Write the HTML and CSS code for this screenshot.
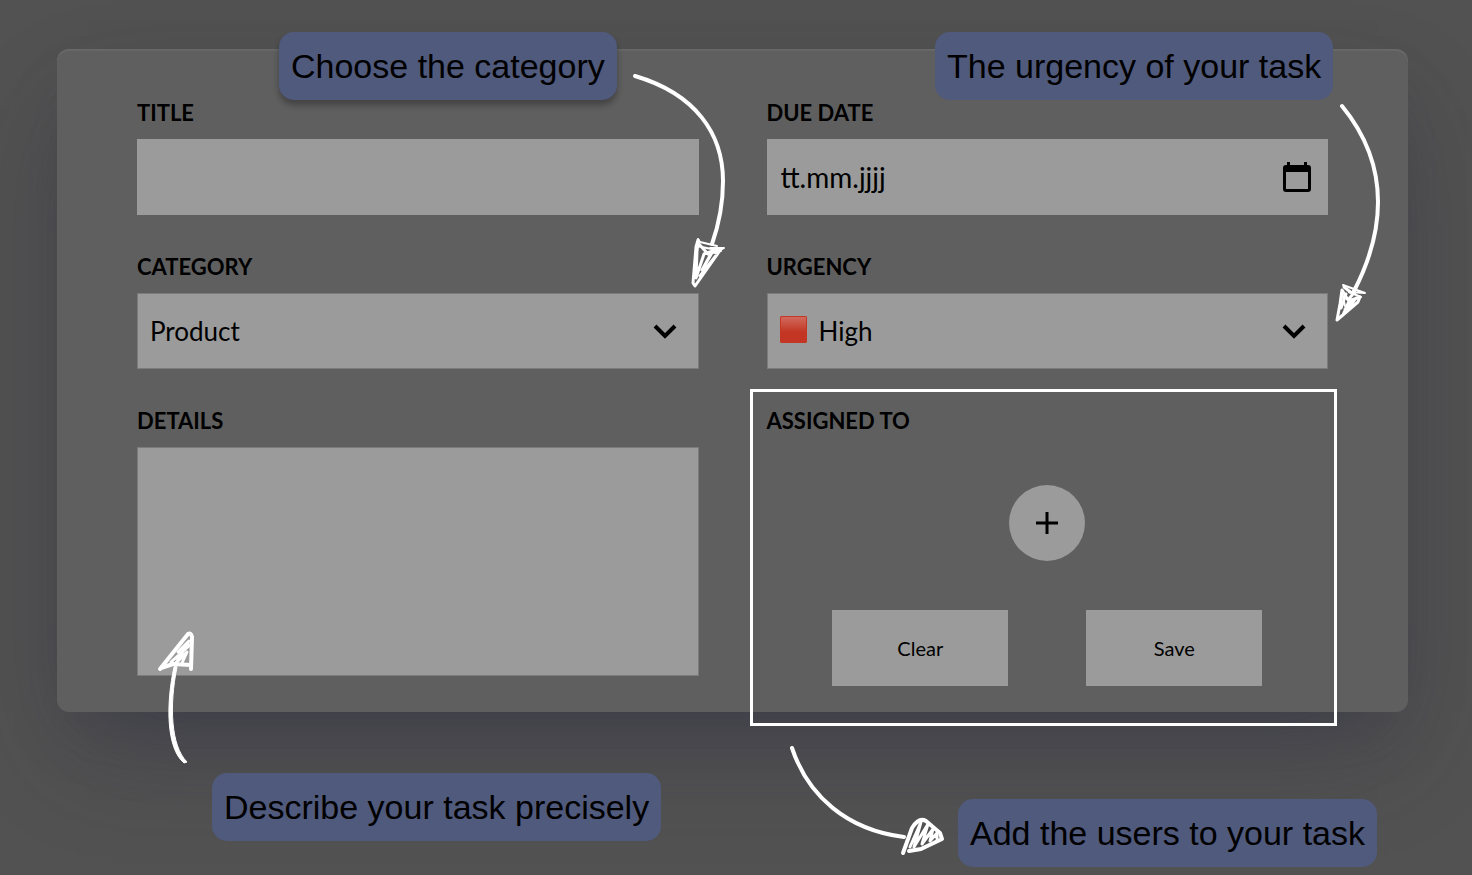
FILE: index.html
```html
<!DOCTYPE html>
<html lang="en">
<head>
<meta charset="utf-8">
<meta name="viewport" content="width=device-width, initial-scale=1">
<title>Add task</title>
<link rel="stylesheet" href="styles.css">
</head>
<body>
<main class="stage">
  <form class="card">
    <div class="field">
      <label for="title">TITLE</label>
      <input class="control" id="title" type="text">
    </div>
    <div class="field">
      <label for="due">DUE DATE</label>
      <div class="control-wrap">
        <input class="control date" id="due" type="text" placeholder="tt.mm.jjjj">
        <button class="calendar" type="button" aria-label="Open calendar">
          <svg width="28" height="30" viewBox="0 0 28 30"><path fill-rule="evenodd" d="M4 0h3v3h14V0h3v3h1a3 3 0 0 1 3 3v21a3 3 0 0 1-3 3H3a3 3 0 0 1-3-3V6a3 3 0 0 1 3-3h1zM3 10v17h22V10z"/></svg>
        </button>
      </div>
    </div>
    <div class="field">
      <label for="category">CATEGORY</label>
      <div class="control-wrap">
        <select class="control outlined" id="category"><option>Product</option></select>
        <svg class="chevron" width="24" height="16" viewBox="0 0 24 16"><path d="M2 2l10 10L22 2"/></svg>
      </div>
    </div>
    <div class="field">
      <label for="urgency">URGENCY</label>
      <div class="control-wrap">
        <select class="control outlined with-swatch" id="urgency"><option>High</option></select>
        <span class="swatch"></span>
        <svg class="chevron" width="24" height="16" viewBox="0 0 24 16"><path d="M2 2l10 10L22 2"/></svg>
      </div>
    </div>
    <div class="field">
      <label for="details">DETAILS</label>
      <textarea class="control outlined details" id="details"></textarea>
    </div>
    <section class="assigned" aria-labelledby="assigned-label">
      <h2 class="assigned-label" id="assigned-label">ASSIGNED TO</h2>
      <button class="add" type="button" aria-label="Add user">
        <svg width="22" height="22" viewBox="0 0 22 22"><path d="M11 0v22M0 11h22"/></svg>
      </button>
      <div class="actions">
        <button class="action" type="reset">Clear</button>
        <button class="action" type="submit">Save</button>
      </div>
    </section>
  </form>

  <p class="callout callout-category">Choose the category</p>
  <p class="callout callout-urgency">The urgency of your task</p>
  <p class="callout callout-details">Describe your task precisely</p>
  <p class="callout callout-users">Add the users to your task</p>

  <svg class="arrow arrow-category" width="110" height="230" viewBox="625 65 110 230">
    <path d="M635 76C696 94 723 134 723 181C723 202 719 224 712 244"/>
    <path class="head" d="M698 240L696 247L693 283L695 286L721 249L708 254L698 243L697 251L696 278L704 254L713 251L702 270L712 252L718 253L700 276"/>
    <path class="sketch" d="M698 239L700 242L717 246M710 248L724 248L715 253M697 246L721 251"/>
  </svg>
  <svg class="arrow arrow-urgency" width="60" height="235" viewBox="1330 95 60 235">
    <path d="M1342 106C1365 134 1378 166 1378 202C1378 234 1368 264 1354 291"/>
    <path class="head" d="M1342 290L1340 304L1337 320L1358 302L1360 297L1349 301L1343 315L1356 298L1345 309M1342 290L1348 300L1353 294L1344 287M1346 294L1341 308"/>
    <path class="sketch" d="M1343 285L1365 293L1349 292L1361 297M1342 292L1345 306"/>
  </svg>
  <svg class="arrow arrow-details" width="50" height="145" viewBox="150 625 50 145">
    <path class="solid" d="M174 667C166 703 166 748 184 763L187 762C171 746 169 706 177 667z"/>
    <path class="head heavy" d="M160 669L188 634Q191 632 192 637L191 669M161 668L173 664L191 665"/>
    <path class="head" d="M171 662L190 645M178 652L189 641L176 663L187 652L182 663"/>
  </svg>
  <svg class="arrow arrow-users" width="165" height="120" viewBox="785 740 165 120">
    <path d="M792 748C808 796 847 830 904 837"/>
    <path class="head heavy" d="M903 853L912 828Q919 817 926 821L940 833L942 839L921 849L909 851"/>
    <path class="head" d="M910 847L921 822L914 847L928 824L922 844L933 829L930 841L937 833L937 839"/>
  </svg>
</main>
</body>
</html>
```
FILE: styles.css
```css
* { box-sizing: border-box; }

body {
  margin: 0;
  background: #525252;
  color: #000;
  font-family: "Lato", "Noto Sans", sans-serif;
}

.stage {
  position: relative;
  min-height: 100vh;
  padding: 49px 64px 64px 57px;
  overflow: hidden;
}

.card {
  display: grid;
  grid-template-columns: 1fr 1fr;
  gap: 37px 68px;
  align-items: start;
  padding: 49px 80px 26px;
  border-radius: 12px;
  background: #5f5f5f;
  box-shadow: 0 50px 100px -20px rgba(50, 50, 70, .45),
    0 30px 60px -30px rgba(50, 50, 60, .5),
    inset 0 2px 1px #686868;
}

.field {
  display: flex;
  flex-direction: column;
  gap: 11px;
}

label,
.assigned-label {
  margin: 0;
  font-size: 22px;
  font-weight: 700;
  line-height: 30px;
}

.control-wrap { position: relative; }

.control {
  display: block;
  width: 100%;
  height: 76px;
  margin: 0;
  padding: 0 14px;
  border: 0;
  border-radius: 0;
  outline: 0;
  background: #9b9b9b;
  color: #000;
  font: inherit;
  font-size: 26px;
  appearance: none;
  resize: none;
}

.control::placeholder { color: #000; opacity: 1; }
.date { font-size: 28px; }
.outlined { border: 1px solid #7b7b7b; padding: 0 12px; }
.with-swatch { padding-left: 51px; }
.details { height: 229px; }

.calendar {
  position: absolute;
  top: 23px;
  right: 17px;
  padding: 0;
  border: 0;
  background: none;
  line-height: 0;
}

.chevron {
  position: absolute;
  top: 31px;
  right: 22px;
  fill: none;
  stroke: #000;
  stroke-width: 4;
  pointer-events: none;
}

.swatch {
  position: absolute;
  top: 23px;
  left: 13px;
  width: 27px;
  height: 27px;
  border: 1px solid #c23824;
  border-radius: 1px;
  background: linear-gradient(#d06a5d, #c33623 60%);
  pointer-events: none;
}

.assigned {
  position: relative;
  display: flex;
  flex-direction: column;
  align-items: center;
  gap: 49px;
}

.assigned::after {
  content: "";
  position: absolute;
  inset: -17px -9px -40px -17px;
  border: 3px solid #fff;
  pointer-events: none;
}

.assigned-label { align-self: flex-start; }

.add {
  display: grid;
  place-items: center;
  width: 76px;
  height: 76px;
  padding: 0;
  border: 0;
  border-radius: 50%;
  background: #9b9b9b;
}

.add svg { stroke: #000; stroke-width: 3; }
.actions { display: flex; gap: 78px; }

.action {
  width: 176px;
  height: 76px;
  border: 0;
  background: #9b9b9b;
  color: #000;
  font: inherit;
  font-size: 20px;
}

.callout {
  position: absolute;
  margin: 0;
  padding: 14px 12px;
  border-radius: 15px;
  background: #505a7c;
  font-family: "Liberation Sans", Arial, sans-serif;
  font-size: 34px;
  line-height: 40px;
  white-space: nowrap;
}

.callout-category { top: 32px; left: 279px; box-shadow: 0 5px 6px rgba(0, 0, 0, .3); }
.callout-urgency { top: 32px; left: 935px; }
.callout-details { top: 773px; left: 212px; }
.callout-users { top: 799px; left: 958px; }

.arrow {
  position: absolute;
  fill: none;
  stroke: #fff;
  stroke-width: 4;
  stroke-linecap: round;
  stroke-linejoin: round;
  pointer-events: none;
}

.arrow .head { stroke-width: 3; }
.arrow .heavy { stroke-width: 4; }
.arrow .sketch { stroke-width: 2; }
.arrow .solid { fill: #fff; stroke-width: 1; }
.arrow-category { top: 65px; left: 625px; }
.arrow-urgency { top: 95px; left: 1330px; }
.arrow-details { top: 625px; left: 150px; }
.arrow-users { top: 740px; left: 785px; }
```
